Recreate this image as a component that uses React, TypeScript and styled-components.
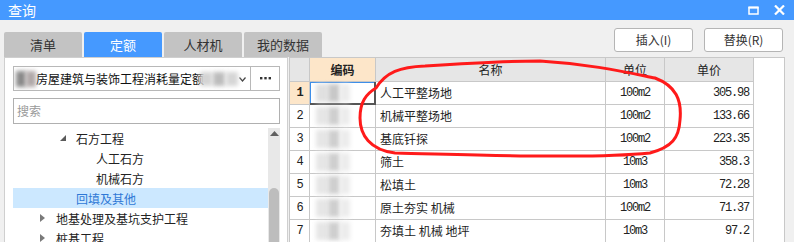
import React from 'react';
import styled, { createGlobalStyle } from 'styled-components';

const GlobalStyle = createGlobalStyle`
  html, body { margin: 0; padding: 0; background: #f0f0f0; overflow: hidden; }
  * { box-sizing: border-box; }
`;

const cjk = `"Noto Sans CJK SC", "Noto Sans", sans-serif`;
const mono = `"Liberation Mono", "Noto Sans CJK SC", monospace`;

const Window = styled.div`
  position: relative;
  width: 794px;
  height: 242px;
  display: flex;
  flex-direction: column;
  background: #f0f0f0;
  font-family: ${cjk};
  font-size: 12px;
  color: #222;
  overflow: hidden;
`;

const TitleBar = styled.div`
  height: 20px;
  flex-shrink: 0;
  background: #4599ff;
  display: flex;
  align-items: center;
  padding: 0 9px 0 8px;
`;

const Title = styled.div`
  color: #fff;
  font-size: 14px;
  line-height: 20px;
  flex: 1;
`;

const WinButtons = styled.div`
  display: flex;
  align-items: center;
  gap: 15px;
`;

const Toolbar = styled.div`
  height: 37px;
  flex-shrink: 0;
  display: flex;
  align-items: flex-end;
  justify-content: space-between;
  padding: 0 11px 0 4px;
`;

const Tabs = styled.div`
  display: flex;
  gap: 2px;
`;

const Tab = styled.div<{ $active?: boolean }>`
  width: 78px;
  height: 25px;
  border-radius: 2px 2px 0 0;
  background: ${p => (p.$active ? '#4599ff' : '#c3c3c3')};
  color: ${p => (p.$active ? '#fff' : '#333')};
  font-size: 13px;
  line-height: 25px;
  text-align: center;
`;

const Actions = styled.div`
  display: flex;
  gap: 11px;
  margin-bottom: 5px;
`;

const Button = styled.div`
  width: 79px;
  height: 24px;
  border: 1px solid #b5b5b5;
  border-radius: 3px;
  background: #fff;
  color: #333;
  font-size: 12px;
  line-height: 22px;
  text-align: center;
`;

const Content = styled.div`
  flex: 1;
  display: flex;
  padding: 0 9px 0 4px;
  min-height: 0;
`;

const LeftPanel = styled.div`
  width: 284px;
  background: #fff;
  border: 1px solid #cfcfcf;
  border-bottom: none;
  padding: 8px 7px 0 8px;
  display: flex;
  flex-direction: column;
`;

const PickerRow = styled.div`
  display: flex;
  height: 25px;
`;

const Picker = styled.div`
  position: relative;
  flex: 1;
  border: 1px solid #b8b8b8;
  display: flex;
  align-items: center;
  padding-left: 22px;
  font-size: 12px;
  color: #111;
  overflow: hidden;
  white-space: nowrap;
`;

const Smudge = styled.div<{ $w: number; $h: number; $c: string }>`
  width: ${p => p.$w}px;
  height: ${p => p.$h}px;
  background: ${p => p.$c};
  filter: blur(2px);
  flex-shrink: 0;
`;

const PickerLeftBlur = styled.div`
  position: absolute;
  left: 2px;
  top: 4px;
  display: flex;
`;

const PickerRightBlur = styled.div`
  position: absolute;
  right: 4px;
  top: 5px;
  display: flex;
  align-items: center;
  gap: 1px;
`;

const MoreButton = styled.div`
  width: 29px;
  border: 1px solid #b8b8b8;
  border-left: none;
  display: flex;
  align-items: center;
  justify-content: center;
`;

const Search = styled.div`
  margin-top: 7px;
  height: 26px;
  border: 1px solid #b0b0b0;
  color: #9a9a9a;
  font-size: 12px;
  line-height: 24px;
  padding-left: 3px;
`;

const TreeArea = styled.div`
  margin-top: 4px;
  flex: 1;
  display: flex;
  min-height: 0;
`;

const TreeList = styled.div`
  flex: 1;
`;

const TreeRow = styled.div<{ $level: number; $selected?: boolean }>`
  height: 20px;
  display: flex;
  align-items: center;
  padding-left: ${p => 27 + p.$level * 20}px;
  background: ${p => (p.$selected ? '#cce8ff' : 'transparent')};
  color: ${p => (p.$selected ? '#2f78d6' : '#222')};
  font-size: 12px;
  white-space: nowrap;
`;

const Arrow = styled.div`
  width: 16px;
  height: 20px;
  display: flex;
  align-items: center;
`;

const Scrollbar = styled.div`
  width: 12px;
  background: #e8e8e8;
  display: flex;
  flex-direction: column;
  align-items: center;
  padding-top: 3px;
`;

const Thumb = styled.div`
  margin-top: 52px;
  width: 10px;
  flex: 1;
  background: #bdbdbd;
  border-radius: 5px 5px 0 0;
`;

const GridPanel = styled.div`
  flex: 1;
  margin-left: 1px;
  background: #fff;
  border: 1px solid #c8c8c8;
  border-bottom: none;
`;

const Grid = styled.div`
  display: grid;
  grid-template-columns: 20px 66px 230px 59px 89px;
`;

const HeadCell = styled.div<{ $bg?: string; $bold?: boolean }>`
  height: 24px;
  background: ${p => p.$bg || '#e6e6e6'};
  border-right: 1px solid #c8c8c8;
  border-bottom: 1px solid #c8c8c8;
  font-size: 12px;
  font-weight: ${p => (p.$bold ? 'bold' : 'normal')};
  line-height: 23px;
  text-align: center;
`;

const Cell = styled.div<{ $align?: 'left' | 'center' | 'right'; $bg?: string; $mono?: boolean; $bold?: boolean }>`
  position: relative;
  height: 23px;
  background: ${p => p.$bg || '#fff'};
  border-right: 1px solid #c8c8c8;
  border-bottom: 1px solid #c8c8c8;
  text-align: ${p => p.$align || 'left'};
  padding: 0 4px;
  font-family: ${p => (p.$mono ? mono : cjk)};
  font-size: 12px;
  letter-spacing: ${p => (p.$mono ? '-1.2px' : '0')};
  font-weight: ${p => (p.$bold ? 'bold' : 'normal')};
  line-height: 22px;
  white-space: nowrap;
`;

const CodeCell = styled(Cell)<{ $focus?: boolean }>`
  display: flex;
  align-items: center;
  padding: 0 0 0 6px;
  ${p =>
    p.$focus
      ? `border-right: 2px solid #555; border-bottom: 2px solid #555; box-shadow: inset 1px 1px 0 #3d8ee8;`
      : ''}
`;

const Annotation = styled.svg`
  position: absolute;
  left: 0;
  top: 0;
  pointer-events: none;
`;

const tree = [
  { label: '石方工程', level: 1, arrow: 'open' },
  { label: '人工石方', level: 2 },
  { label: '机械石方', level: 2 },
  { label: '回填及其他', level: 1, selected: true },
  { label: '地基处理及基坑支护工程', level: 0, arrow: 'closed' },
  { label: '桩基工程', level: 0, arrow: 'closed' },
];

const rows = [
  { name: '人工平整场地', unit: '100m2', price: '305.98' },
  { name: '机械平整场地', unit: '100m2', price: '133.66' },
  { name: '基底钎探', unit: '100m2', price: '223.35' },
  { name: '筛土', unit: '10m3', price: '358.3' },
  { name: '松填土', unit: '10m3', price: '72.28' },
  { name: '原土夯实 机械', unit: '100m2', price: '71.37' },
  { name: '夯填土 机械 地坪', unit: '10m3', price: '97.2' },
];

function TreeArrow({ kind }: { kind?: string }) {
  if (kind === 'open')
    return (
      <svg width="6" height="6" viewBox="0 0 6 6">
        <polygon points="6,0 6,6 0,6" fill="#5a5a5a" />
      </svg>
    );
  if (kind === 'closed')
    return (
      <svg width="5" height="8" viewBox="0 0 5 8">
        <polygon points="0,0 5,4 0,8" fill="#7a7a7a" />
      </svg>
    );
  return null;
}

export default function App() {
  return (
    <Window>
      <GlobalStyle />
      <TitleBar>
        <Title>查询</Title>
        <WinButtons>
          <svg width="11" height="9" viewBox="0 0 11 9">
            <rect x="1" y="1.5" width="9" height="6.5" fill="none" stroke="#fff" strokeWidth="1.5" />
            <rect x="0.5" y="0.5" width="10" height="2" fill="#fff" />
          </svg>
          <svg width="11" height="10" viewBox="0 0 11 10">
            <path d="M1 0.5 L10 9.5 M10 0.5 L1 9.5" stroke="#fff" strokeWidth="2.2" />
          </svg>
        </WinButtons>
      </TitleBar>

      <Toolbar>
        <Tabs>
          <Tab>清单</Tab>
          <Tab $active>定额</Tab>
          <Tab>人材机</Tab>
          <Tab>我的数据</Tab>
        </Tabs>
        <Actions>
          <Button>插入(I)</Button>
          <Button>替换(R)</Button>
        </Actions>
      </Toolbar>

      <Content>
        <LeftPanel>
          <PickerRow>
            <Picker>
              <PickerLeftBlur>
                <Smudge $w={10} $h={16} $c="#8a8a8a" />
                <Smudge $w={10} $h={16} $c="#b0a8a8" />
              </PickerLeftBlur>
              房屋建筑与装饰工程消耗量定额
              <PickerRightBlur>
                <Smudge $w={12} $h={14} $c="#d4d4d4" />
                <Smudge $w={12} $h={14} $c="#bcbcbc" />
                <Smudge $w={12} $h={14} $c="#d6d6d6" />
                <svg width="7" height="5" viewBox="0 0 7 5">
                  <path d="M0.5 0.5 L3.5 4 L6.5 0.5" fill="none" stroke="#444" strokeWidth="1.2" />
                </svg>
              </PickerRightBlur>
            </Picker>
            <MoreButton>
              <svg width="11" height="3" viewBox="0 0 11 3">
                <rect x="0" y="0" width="2.4" height="2.4" fill="#333" />
                <rect x="4.3" y="0" width="2.4" height="2.4" fill="#333" />
                <rect x="8.6" y="0" width="2.4" height="2.4" fill="#333" />
              </svg>
            </MoreButton>
          </PickerRow>
          <Search>搜索</Search>
          <TreeArea>
            <TreeList>
              {tree.map(t => (
                <TreeRow key={t.label} $level={t.level} $selected={t.selected}>
                  <Arrow>
                    <TreeArrow kind={t.arrow} />
                  </Arrow>
                  {t.label}
                </TreeRow>
              ))}
            </TreeList>
            <Scrollbar>
              <svg width="9" height="5" viewBox="0 0 9 5">
                <polygon points="4.5,0 9,5 0,5" fill="#606060" />
              </svg>
              <Thumb />
            </Scrollbar>
          </TreeArea>
        </LeftPanel>

        <GridPanel>
          <Grid>
            <HeadCell />
            <HeadCell $bg="#fde6c9" $bold>编码</HeadCell>
            <HeadCell>名称</HeadCell>
            <HeadCell>单位</HeadCell>
            <HeadCell>单价</HeadCell>
            {rows.map((r, i) => (
              <React.Fragment key={i}>
                <Cell $align="center" $mono $bg={i === 0 ? '#fde6c9' : undefined} $bold={i === 0}>
                  {i + 1}
                </Cell>
                <CodeCell $focus={i === 0}>
                  <Smudge $w={12} $h={18} $c={i === 0 ? '#e0e0e0' : '#e6e6e6'} />
                  <Smudge $w={12} $h={18} $c={i === 0 ? '#c8c8c8' : '#cfcfcf'} />
                  <Smudge $w={10} $h={18} $c="#ececec" />
                </CodeCell>
                <Cell>{r.name}</Cell>
                <Cell $align="center" $mono>{r.unit}</Cell>
                <Cell $align="right" $mono>{r.price}</Cell>
              </React.Fragment>
            ))}
          </Grid>
        </GridPanel>
      </Content>

      <Annotation width="794" height="242" viewBox="0 0 794 242">
        <path
          d="M376 88 C386 72 400 67 425 66 C470 63 505 61 540 61 C590 64 625 72 655 78 C676 86 682 100 680 120 C679 138 672 147 650 153 C610 157 570 156 545 156 C500 156 440 154 395 153 C370 150 360 135 360 118 C360 102 366 94 376 88"
          fill="none"
          stroke="#ff1a1a"
          strokeWidth="3"
          strokeLinecap="round"
        />
      </Annotation>
    </Window>
  );
}
